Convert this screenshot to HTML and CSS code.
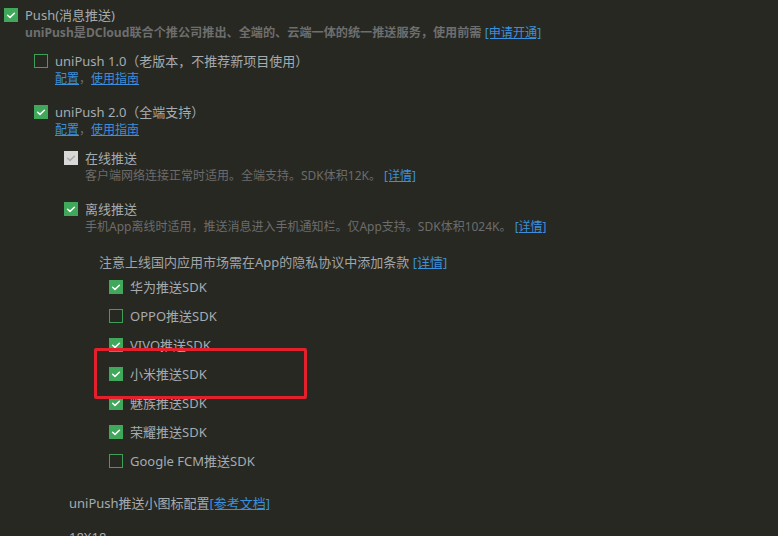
FILE: index.html
```html
<!DOCTYPE html>
<html lang="zh-CN">
<head>
<meta charset="utf-8">
<title>Push</title>
<link rel="stylesheet" href="styles.css">
</head>
<body>
<div class="page">
  <div class="opt top">
    <div class="row"><span class="cb on"><svg viewBox="0 0 14 14"><path d="M3.6 7.3 L6 9.4 L10.4 5.2"/></svg></span><span class="label">Push(消息推送)</span></div>
    <div class="desc strong">uniPush是DCloud联合个推公司推出、全端的、云端一体的统一推送服务，使用前需 <a class="link">[申请开通]</a></div>

    <div class="children lv1">
      <div class="opt">
        <div class="row"><span class="cb"></span><span class="label">uniPush 1.0（老版本，不推荐新项目使用）</span></div>
        <div class="desc links"><a class="link">配置</a>，<a class="link">使用指南</a></div>
      </div>

      <div class="opt sib">
        <div class="row"><span class="cb on"><svg viewBox="0 0 14 14"><path d="M3.6 7.3 L6 9.4 L10.4 5.2"/></svg></span><span class="label">uniPush 2.0（全端支持）</span></div>
        <div class="desc links"><a class="link">配置</a>，<a class="link">使用指南</a></div>

        <div class="children lv2">
          <div class="opt">
            <div class="row"><span class="cb dis"><svg viewBox="0 0 14 14"><path d="M3.6 7.3 L6 9.4 L10.4 5.2"/></svg></span><span class="label">在线推送</span></div>
            <div class="desc">客户端网络连接正常时适用。全端支持。SDK体积12K。 <a class="link">[详情]</a></div>
          </div>
          <div class="opt sib">
            <div class="row"><span class="cb on"><svg viewBox="0 0 14 14"><path d="M3.6 7.3 L6 9.4 L10.4 5.2"/></svg></span><span class="label">离线推送</span></div>
            <div class="desc">手机App离线时适用，推送消息进入手机通知栏。仅App支持。SDK体积1024K。 <a class="link">[详情]</a></div>

            <div class="vendors">
              <div class="notice">注意上线国内应用市场需在App的隐私协议中添加条款 <a class="link">[详情]</a></div>
              <div class="vendor-list">
                <div class="row vendor"><span class="cb on"><svg viewBox="0 0 14 14"><path d="M3.6 7.3 L6 9.4 L10.4 5.2"/></svg></span><span class="label">华为推送SDK</span></div>
                <div class="row vendor"><span class="cb"></span><span class="label">OPPO推送SDK</span></div>
                <div class="row vendor"><span class="cb on"><svg viewBox="0 0 14 14"><path d="M3.6 7.3 L6 9.4 L10.4 5.2"/></svg></span><span class="label">VIVO推送SDK</span></div>
                <div class="row vendor"><span class="cb on"><svg viewBox="0 0 14 14"><path d="M3.6 7.3 L6 9.4 L10.4 5.2"/></svg></span><span class="label">小米推送SDK</span></div>
                <div class="row vendor"><span class="cb on"><svg viewBox="0 0 14 14"><path d="M3.6 7.3 L6 9.4 L10.4 5.2"/></svg></span><span class="label">魅族推送SDK</span></div>
                <div class="row vendor"><span class="cb on"><svg viewBox="0 0 14 14"><path d="M3.6 7.3 L6 9.4 L10.4 5.2"/></svg></span><span class="label">荣耀推送SDK</span></div>
                <div class="row vendor"><span class="cb"></span><span class="label">Google FCM推送SDK</span></div>
              </div>
            </div>
          </div>
        </div>

        <div class="icon-cfg">
          <div class="label">uniPush推送小图标配置<a class="link">[参考文档]</a></div>
          <div class="label size">18X18</div>
        </div>
      </div>
    </div>
  </div>
  <div class="highlight"></div>
</div>
</body>
</html>
```

FILE: styles.css
```css
* { box-sizing: border-box; }
html, body {
  margin: 0;
  padding: 0;
  background: #272822;
  height: 100%;
  overflow: hidden;
}
body {
  font-family: "Noto Sans", "Noto Sans CJK SC", sans-serif;
  color: #a6abb0;
}
.page {
  position: relative;
  padding: 6px 0 0 4px;
  height: 536px;
}
.row {
  display: flex;
  align-items: center;
  gap: 7px;
  height: 18px;
}
.label {
  font-size: 13px;
  line-height: 18px;
  color: #a6abb0;
  white-space: nowrap;
}
.cb {
  flex: none;
  width: 14px;
  height: 14px;
  border: 1.5px solid #3e9f58;
  display: flex;
  align-items: center;
  justify-content: center;
}
.cb svg {
  width: 14px;
  height: 14px;
  fill: none;
  stroke: #ffffff;
  stroke-width: 1.5;
  stroke-linecap: round;
  stroke-linejoin: round;
}
.cb.on {
  background: #3fa85b;
  border: none;
}
.cb.dis {
  background: #d8d8d8;
  border: none;
}
.cb.dis svg { stroke: #a9a9a9; }
.desc {
  padding-left: 21px;
  font-size: 12px;
  line-height: 18px;
  color: #6c6c6c;
  white-space: nowrap;
}
.desc.strong {
  font-size: 12.15px;
  font-weight: bold;
  color: #6e6e6e;
}
.link {
  color: #3c8fdb;
  text-decoration: underline;
  font-weight: normal;
  cursor: pointer;
}
.children.lv1 {
  margin-left: 30px;
  margin-top: 10px;
}
.children.lv2 {
  margin-left: 30px;
  margin-top: 10px;
}
.opt.sib { margin-top: 15px; }
.vendors {
  margin-left: 35px;
  margin-top: 17px;
}
.notice {
  font-size: 13px;
  line-height: 18px;
  color: #a1a5a9;
  white-space: nowrap;
}
.vendor-list {
  margin-left: 10px;
  margin-top: 7px;
  display: flex;
  flex-direction: column;
  gap: 11px;
}
.icon-cfg {
  margin-left: 35px;
  margin-top: 24px;
  display: flex;
  flex-direction: column;
  gap: 16px;
}
.icon-cfg .label { display: block; }
.highlight {
  position: absolute;
  left: 94px;
  top: 348px;
  width: 213px;
  height: 51px;
  border: 3px solid #e3202b;
  border-radius: 2px;
}
```
